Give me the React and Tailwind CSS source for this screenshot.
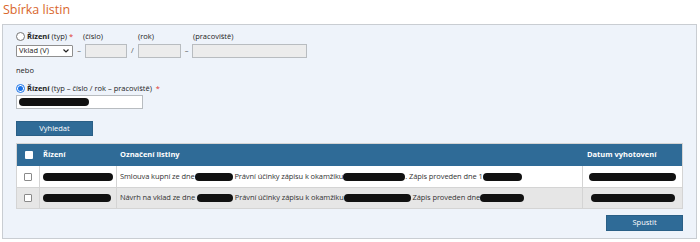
import React from 'react';

const Blob = ({ w, className = '' }) => (
  <span className={`inline-block h-[8px] rounded-full bg-[#111] align-middle ${className}`} style={{ width: w }} />
);

const Radio = ({ checked }) => (
  <span
    className={`inline-flex shrink-0 w-[9px] h-[9px] rounded-full border items-center justify-center bg-white ${
      checked ? 'border-[#1a73e8]' : 'border-[#767676]'
    }`}
  >
    {checked && <span className="w-[5px] h-[5px] rounded-full bg-[#1a73e8]" />}
  </span>
);

const Check = () => <span className="inline-block w-[8px] h-[8px] border border-[#8a8a8a] rounded-[1px] bg-white" />;

const rows = [
  {
    bg: 'bg-white',
    rizeni: 70,
    parts: ['Smlouva kupní ze dne', 38, ' Právní účinky zápisu k okamžiku', 62, '. Zápis proveden dne 1', 39],
    datum: 87,
  },
  {
    bg: 'bg-[#e6e6e6]',
    rizeni: 68,
    parts: ['Návrh na vklad ze dne ', 36, ' Právní účinky zápisu k okamžiku', 67, ' Zápis proveden dne', 44],
    datum: 84,
  },
];

export default function App() {
  return (
    <div className="w-[700px] h-[242px] bg-white text-[#222] font-['Open_Sans','Noto_Sans',sans-serif] overflow-hidden">
      <div className="h-[24px] pl-[3px] pt-[1px] text-[12.5px] leading-[18px] text-[#d9662c]">Sbírka listin</div>
      <div className="ml-[2px] w-[695px] h-[215px] border border-[#c9cdd2] bg-[#eef3fa] pl-[13px] pr-[13px] pt-[6px] text-[7.5px]">
        <div className="flex h-[11px] items-center">
          <div className="w-[67px] flex items-center gap-[2px] whitespace-pre">
            <Radio />
            <span><b>Řízení</b> (typ) <span className="text-[#e0332f]">*</span></span>
          </div>
          <div className="w-[55px]">(číslo)</div>
          <div className="w-[55px]">(rok)</div>
          <div>(pracoviště)</div>
        </div>
        <div className="flex h-[15px] items-center mt-px">
          <div className="w-[57px] h-[12px] border border-[#8f8f8f] bg-white rounded-[1px] flex items-center justify-between pl-[2px] pr-[3px]">
            <span className="text-[7.5px]">Vklad (V)</span>
            <svg width="6" height="4" viewBox="0 0 6 4"><path d="M0.5 0.5 L3 3 L5.5 0.5" stroke="#222" strokeWidth="1.2" fill="none" /></svg>
          </div>
          <div className="w-[12px] text-center text-[#555]">–</div>
          <div className="w-[42px] h-[14px] border border-[#b8bcc0] bg-[#ececec]" />
          <div className="w-[11px] text-center text-[#555]">/</div>
          <div className="w-[43px] h-[14px] border border-[#b8bcc0] bg-[#ececec]" />
          <div className="w-[11px] text-center text-[#555]">–</div>
          <div className="w-[115px] h-[14px] border border-[#b8bcc0] bg-[#ececec]" />
        </div>
        <div className="mt-[7px] h-[11px] leading-[11px]">nebo</div>
        <div className="mt-[7px] flex h-[11px] items-center gap-[2px] whitespace-pre">
          <Radio checked />
          <span><b>Řízení</b> (typ – číslo / rok – pracoviště)  <span className="text-[#e0332f]">*</span></span>
        </div>
        <div className="mt-[1px] w-[127px] h-[14px] border border-[#b8bcc0] bg-white flex items-center pl-[2px]">
          <Blob w={70} />
        </div>
        <button className="mt-[12px] w-[77px] h-[15px] bg-[#2f6b97] text-white text-[7.5px] flex items-center justify-center border border-[#2a5f86]">
          Vyhledat
        </button>
        <div className="mt-[7px] w-[667px] border border-[#d4d4d4]">
          <div className="flex h-[22px] bg-[#2f6b97] text-white font-bold items-center">
            <div className="w-[23px] flex justify-center"><span className="inline-block w-[8px] h-[8px] bg-white rounded-[1px]" /></div>
            <div className="w-[77px] pl-[3px]">Řízení</div>
            <div className="w-[466px] pl-[3px]">Označení listiny</div>
            <div className="flex-1 pl-[4px]">Datum vyhotovení</div>
          </div>
          {rows.map((r, i) => (
            <div key={i} className={`flex h-[21px] items-center ${r.bg} ${i ? 'border-t border-[#d4d4d4]' : ''}`}>
              <div className="w-[23px] h-full flex items-center justify-center border-r border-[#d4d4d4]"><Check /></div>
              <div className="w-[77px] h-full flex items-center pl-[3px] border-r border-[#d4d4d4]"><Blob w={r.rizeni} /></div>
              <div className="w-[466px] h-full flex items-center pl-[3px] border-r border-[#d4d4d4] whitespace-pre text-[#333] tracking-[-0.1px]">
                {r.parts.map((p, j) => (typeof p === 'number' ? <Blob key={j} w={p} /> : <span key={j}>{p}</span>))}
              </div>
              <div className="flex-1 h-full flex items-center justify-center"><Blob w={r.datum} /></div>
            </div>
          ))}
        </div>
        <div className="flex justify-end mt-[6px] w-[667px]">
          <button className="w-[77px] h-[16px] bg-[#2f6b97] text-white text-[7.5px] flex items-center justify-center border border-[#2a5f86]">
            Spustit
          </button>
        </div>
      </div>
    </div>
  );
}
